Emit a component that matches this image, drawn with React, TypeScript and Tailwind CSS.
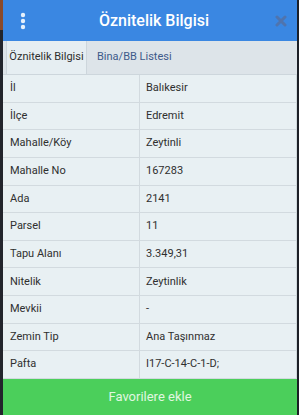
import React from 'react';

const rows: [string, string][] = [
  ['İl', 'Balıkesir'],
  ['İlçe', 'Edremit'],
  ['Mahalle/Köy', 'Zeytinli'],
  ['Mahalle No', '167283'],
  ['Ada', '2141'],
  ['Parsel', '11'],
  ['Tapu Alanı', '3.349,31'],
  ['Nitelik', 'Zeytinlik'],
  ['Mevkii', '-'],
  ['Zemin Tip', 'Ana Taşınmaz'],
  ['Pafta', 'I17-C-14-C-1-D;'],
];

export default function App() {
  return (
    <div
      className="w-[299px] h-[415px] flex bg-[#1c1f26] overflow-hidden"
      style={{ fontFamily: 'Roboto, "Noto Sans", sans-serif' }}
    >
      <div className="w-[3px] flex flex-col">
        <div className="h-[30px] bg-[#8a4a2a]" />
        <div className="flex-1 bg-[#22252c]" />
      </div>
      <div className="w-[294px] flex flex-col">
        <header className="h-[41px] bg-[#3a87e2] flex items-center pl-[14px] pr-[10px]">
          <svg width="16" height="20" viewBox="0 0 16 20" className="shrink-0">
            <circle cx="6" cy="4" r="2.2" fill="#e6f0fb" />
            <circle cx="6" cy="10" r="2.2" fill="#e6f0fb" />
            <circle cx="6" cy="16" r="2.2" fill="#e6f0fb" />
          </svg>
          <div className="flex-1 text-center text-white text-[16px] font-medium">Öznitelik Bilgisi</div>
          <svg width="12" height="12" viewBox="0 0 12 12" className="shrink-0">
            <path d="M2 2 L10 10 M10 2 L2 10" stroke="#4f74ae" strokeWidth="3" strokeLinecap="round" />
          </svg>
        </header>
        <nav className="h-[34px] bg-[#dde4e9] flex pl-[3px] border-b border-[#cdd6dc]">
          <div className="w-[81px] bg-[#e6eef2] border-l border-r border-[#cdd6dc] flex items-center justify-center text-[11px] text-[#2e2e2e]">
            Öznitelik Bilgisi
          </div>
          <div className="px-[10px] flex items-center text-[11px] text-[#3d5a8a]">Bina/BB Listesi</div>
        </nav>
        <div className="flex-1 flex flex-col bg-[#e8f0f3] border-r border-[#cfd8dc]">
          {rows.map(([k, v]) => (
            <div key={k} className="flex-1 flex border-b border-[#d2dadf] text-[11px] text-[#2f2f2f]">
              <div className="w-[137px] pl-[7px] flex items-center border-r border-[#d2dadf]">{k}</div>
              <div className="flex-1 pl-[6px] flex items-center">{v}</div>
            </div>
          ))}
        </div>
        <button className="h-[36px] bg-[#4bcf5b] text-[#e0f7e0] text-[13px] flex items-center justify-center">
          Favorilere ekle
        </button>
      </div>
      <div className="w-[2px] bg-[#1c1f26]" />
    </div>
  );
}
